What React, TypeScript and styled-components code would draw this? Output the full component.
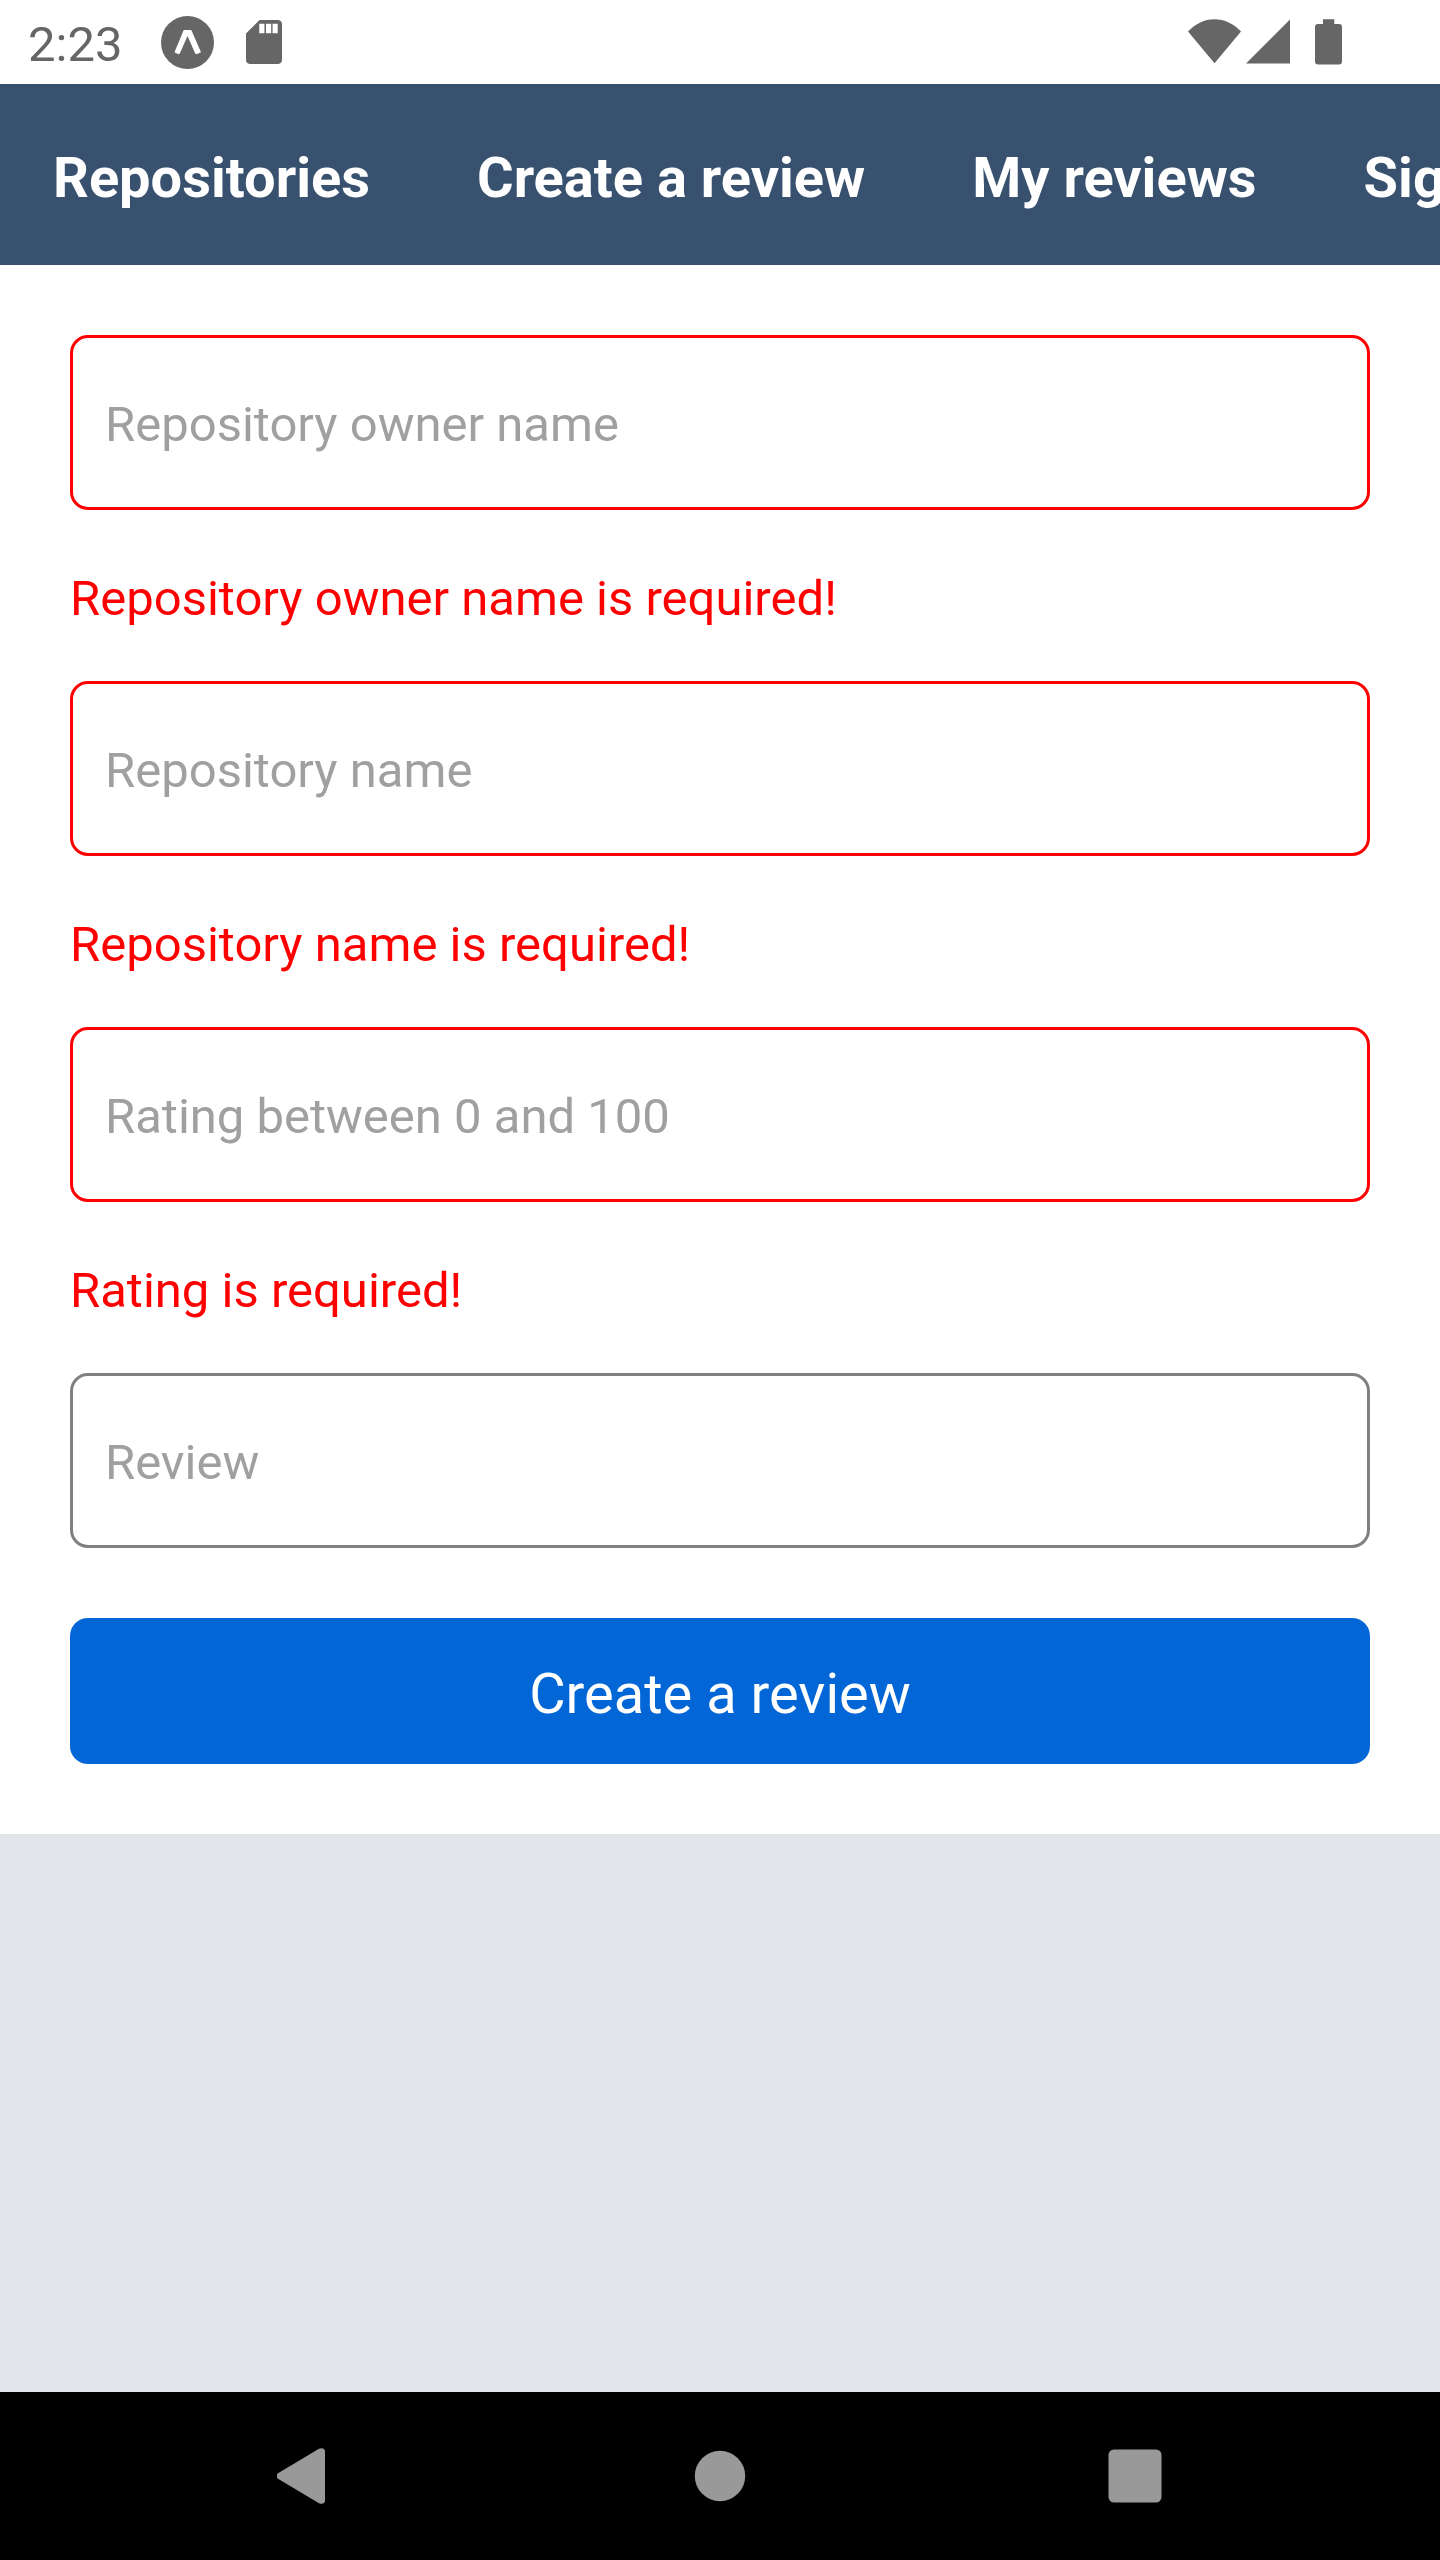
import React, { useState } from "react";
import styled, { createGlobalStyle } from "styled-components";

const colors = {
  bar: "#38516f",
  primary: "#0366d6",
  error: "#ff0000",
  border: "#808080",
  placeholder: "#a0a0a0",
  status: "#666666",
  page: "#e1e4e8",
  softKey: "#999999",
};

const GlobalStyle = createGlobalStyle`
  *, *::before, *::after { box-sizing: border-box; }
  body {
    margin: 0;
    font-family: Roboto, "Noto Sans", sans-serif;
    background: ${colors.page};
  }
`;

const Screen = styled.div`
  display: flex;
  flex-direction: column;
  min-height: 100vh;
`;

const StatusBar = styled.header`
  display: flex;
  align-items: center;
  justify-content: space-between;
  height: 84px;
  padding: 0 98px 0 28px;
  background: #fff;
  color: ${colors.status};
`;

const StatusGroup = styled.div<{ $gap: number }>`
  display: flex;
  align-items: center;
  gap: ${(p) => p.$gap}px;

  svg {
    display: block;
    fill: currentColor;
  }
`;

const Clock = styled.time`
  padding-top: 5px;
  font-size: 49px;
  line-height: 58px;
`;

const AppBar = styled.nav`
  display: flex;
  gap: 1px;
  overflow-x: auto;
  scrollbar-width: none;
  background: ${colors.bar};
`;

const Tab = styled.a`
  flex: none;
  padding: 61px 53px 54px;
  color: #fff;
  font-size: 56px;
  font-weight: 700;
  line-height: 66px;
  text-decoration: none;
  white-space: nowrap;
`;

const Form = styled.form`
  display: flex;
  flex-direction: column;
  padding: 70px;
  background: #fff;
`;

const Input = styled.input<{ $invalid: boolean }>`
  display: block;
  width: 100%;
  height: 175px;
  padding: 57px 32px 54px;
  border: 3px solid ${(p) => (p.$invalid ? colors.error : colors.border)};
  border-radius: 18px;
  outline: none;
  background: transparent;
  color: #000;
  font-family: inherit;
  font-size: 49px;
  line-height: 58px;

  &::placeholder {
    color: ${colors.placeholder};
    opacity: 1;
  }
`;

const ErrorText = styled.p`
  margin: 0;
  padding: 60px 0 53px;
  color: ${colors.error};
  font-size: 49px;
  line-height: 58px;
`;

const SubmitButton = styled.button`
  margin-top: 70px;
  padding: 43px 32px 37px;
  border: 0;
  border-radius: 18px;
  background: ${colors.primary};
  color: #fff;
  font-family: inherit;
  font-size: 56px;
  line-height: 66px;
  cursor: pointer;
`;

const Content = styled.main`
  flex: 1;
`;

const SoftKeys = styled.footer`
  display: grid;
  grid-template-columns: repeat(3, 1fr);
  height: 168px;
  padding: 0 97px;
  background: #000;
`;

const SoftKey = styled.button`
  display: flex;
  align-items: center;
  justify-content: center;
  padding: 0;
  border: 0;
  background: transparent;
  color: ${colors.softKey};

  svg {
    display: block;
    fill: currentColor;
  }
`;

const ExpoIcon = () => (
  <svg width="53" height="53" viewBox="0 0 53 53" aria-hidden="true">
    <circle cx="26.5" cy="26.5" r="26.5" />
    <path
      fill="#fff"
      d="M22.7 14h7.6L40 36.3 35.6 38.3 34.2 37.6 26.5 20 18.8 37.6 17.4 38.3 13.5 36.3z"
    />
  </svg>
);

const SdCardIcon = () => (
  <svg width="54" height="54" viewBox="0 0 24 24" aria-hidden="true">
    <path d="M18 2.2h-8L4 8.2V20c0 1.1.9 1.8 2 1.8h12c1.1 0 2-.7 2-1.8V4c0-1.1-.9-1.8-2-1.8zM12.2 8.1H9.9V3.9h2.3zm3 0h-2.3V3.9h2.3zm2.9 0h-2.3V3.9h2.3z" />
  </svg>
);

const WifiIcon = () => (
  <svg width="53" height="46" viewBox="0 0 53 46" aria-hidden="true">
    <path d="M0 12.5C7.5 4.5 16.5.2 26.5.2S45.5 4.5 53 12.5L26.5 44.3z" />
  </svg>
);

const SignalIcon = () => (
  <svg width="44" height="46" viewBox="0 0 44 46" aria-hidden="true">
    <path d="M44 .5V44.5H0z" />
  </svg>
);

const BatteryIcon = () => (
  <svg width="27" height="46" viewBox="0 0 27 46" aria-hidden="true">
    <path d="M8 .2h11.3V5H24a3 3 0 0 1 3 3v34.6a3 3 0 0 1-3 3H3a3 3 0 0 1-3-3V8a3 3 0 0 1 3-3h5z" />
  </svg>
);

const tabs = ["Repositories", "Create a review", "My reviews", "Sign out"];

const fields = [
  {
    id: "ownerName",
    placeholder: "Repository owner name",
    error: "Repository owner name is required!",
  },
  {
    id: "repositoryName",
    placeholder: "Repository name",
    error: "Repository name is required!",
  },
  {
    id: "rating",
    placeholder: "Rating between 0 and 100",
    error: "Rating is required!",
  },
  { id: "text", placeholder: "Review" },
];

export default function App() {
  const [values, setValues] = useState<Record<string, string>>({});

  return (
    <Screen>
      <GlobalStyle />
      <StatusBar>
        <StatusGroup $gap={39}>
          <Clock>2:23</Clock>
          <StatusGroup $gap={23}>
            <ExpoIcon />
            <SdCardIcon />
          </StatusGroup>
        </StatusGroup>
        <StatusGroup $gap={25}>
          <StatusGroup $gap={5}>
            <WifiIcon />
            <SignalIcon />
          </StatusGroup>
          <BatteryIcon />
        </StatusGroup>
      </StatusBar>

      <AppBar>
        {tabs.map((tab) => (
          <Tab key={tab} href="#">
            {tab}
          </Tab>
        ))}
      </AppBar>

      <Content>
        <Form noValidate onSubmit={(event) => event.preventDefault()}>
          {fields.map(({ id, placeholder, error }) => {
            const invalid = Boolean(error) && !values[id];
            return (
              <React.Fragment key={id}>
                <Input
                  id={id}
                  type="text"
                  aria-label={placeholder}
                  aria-invalid={invalid}
                  aria-describedby={invalid ? `${id}-error` : undefined}
                  placeholder={placeholder}
                  value={values[id] ?? ""}
                  onChange={(event) =>
                    setValues({ ...values, [id]: event.target.value })
                  }
                  $invalid={invalid}
                />
                {invalid && <ErrorText id={`${id}-error`}>{error}</ErrorText>}
              </React.Fragment>
            );
          })}
          <SubmitButton type="submit">Create a review</SubmitButton>
        </Form>
      </Content>

      <SoftKeys>
        <SoftKey type="button" aria-label="Back">
          <svg width="56" height="56" viewBox="0 0 56 56" aria-hidden="true">
            <path d="M1 25.2 42 .8C44.500-.6 48 .3 48 3.200V52.800C48 55.700 44.500 56.600 42 55.200L1 30.800C-.8 29.500-.8 26.500 1 25.200z" />
          </svg>
        </SoftKey>
        <SoftKey type="button" aria-label="Home">
          <svg width="56" height="56" viewBox="0 0 56 56" aria-hidden="true">
            <circle cx="28" cy="28" r="25.2" />
          </svg>
        </SoftKey>
        <SoftKey type="button" aria-label="Overview">
          <svg width="56" height="56" viewBox="0 0 56 56" aria-hidden="true">
            <rect x="1.5" y="1.5" width="53" height="53" rx="5.5" />
          </svg>
        </SoftKey>
      </SoftKeys>
    </Screen>
  );
}
